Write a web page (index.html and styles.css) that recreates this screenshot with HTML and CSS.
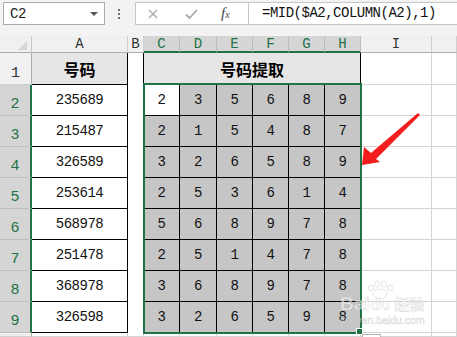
FILE: index.html
```html
<!DOCTYPE html>
<html lang="zh">
<head>
<meta charset="utf-8">
<title>号码提取</title>
<link rel="stylesheet" href="styles.css">
</head>
<body>
<div class="app">
  <div class="toolbar">
    <div class="namebox"><span>C2</span><i class="caret"></i></div>
    <div class="dots"><i></i><i></i><i></i></div>
    <div class="fbar">
      <div class="fbtns">
        <svg class="ic-x" width="10" height="10" viewBox="0 0 10 10"><path d="M1 1L9 9M9 1L1 9" stroke="#a8a8a8" stroke-width="1.4" fill="none"/></svg>
        <svg class="ic-ok" width="13" height="10" viewBox="0 0 13 10"><path d="M1 5.5L4.5 9L12 1" stroke="#a8a8a8" stroke-width="1.8" fill="none"/></svg>
        <span class="fx">f<small>x</small></span>
      </div>
      <div class="ftext">=MID($A2,COLUMN(A2),1)</div>
    </div>
  </div>

  <div class="sheet">
    <div class="corner"></div>
    <div class="ch">A</div><div class="ch">B</div>
    <div class="ch sel">C</div><div class="ch sel">D</div><div class="ch sel">E</div>
    <div class="ch sel">F</div><div class="ch sel">G</div><div class="ch sel">H</div>
    <div class="ch">I</div><div class="ch"></div>

    <div class="rh">1</div><div class="a hd">号码</div><div class="b"></div>
    <div class="m hd">号码提取</div><div class="g"></div><div class="g"></div>

    <div class="rh sel">2</div><div class="a">235689</div><div class="b"></div>
    <div class="d act">2</div><div class="d">3</div><div class="d">5</div><div class="d">6</div><div class="d">8</div><div class="d">9</div>
    <div class="g"></div><div class="g"></div>

    <div class="rh sel">3</div><div class="a">215487</div><div class="b"></div>
    <div class="d">2</div><div class="d">1</div><div class="d">5</div><div class="d">4</div><div class="d">8</div><div class="d">7</div>
    <div class="g"></div><div class="g"></div>

    <div class="rh sel">4</div><div class="a">326589</div><div class="b"></div>
    <div class="d">3</div><div class="d">2</div><div class="d">6</div><div class="d">5</div><div class="d">8</div><div class="d">9</div>
    <div class="g"></div><div class="g"></div>

    <div class="rh sel">5</div><div class="a">253614</div><div class="b"></div>
    <div class="d">2</div><div class="d">5</div><div class="d">3</div><div class="d">6</div><div class="d">1</div><div class="d">4</div>
    <div class="g"></div><div class="g"></div>

    <div class="rh sel">6</div><div class="a">568978</div><div class="b"></div>
    <div class="d">5</div><div class="d">6</div><div class="d">8</div><div class="d">9</div><div class="d">7</div><div class="d">8</div>
    <div class="g"></div><div class="g"></div>

    <div class="rh sel">7</div><div class="a">251478</div><div class="b"></div>
    <div class="d">2</div><div class="d">5</div><div class="d">1</div><div class="d">4</div><div class="d">7</div><div class="d">8</div>
    <div class="g"></div><div class="g"></div>

    <div class="rh sel">8</div><div class="a">368978</div><div class="b"></div>
    <div class="d">3</div><div class="d">6</div><div class="d">8</div><div class="d">9</div><div class="d">7</div><div class="d">8</div>
    <div class="g"></div><div class="g"></div>

    <div class="rh sel">9</div><div class="a">326598</div><div class="b"></div>
    <div class="d">3</div><div class="d">2</div><div class="d">6</div><div class="d">5</div><div class="d">9</div><div class="d">8</div>
    <div class="g"></div><div class="g"></div>

    <div class="rh"></div><div class="g"></div><div class="g"></div>
    <div class="g"></div><div class="g"></div><div class="g"></div><div class="g"></div><div class="g"></div><div class="g"></div>
    <div class="g"></div><div class="g"></div>

    <div class="selbox"></div>
  </div>

  <svg class="overlay" width="457" height="337" viewBox="0 0 457 337">
    <rect x="362.5" y="334.5" width="18" height="8" fill="#fff" stroke="#b0b0b0"/>
    <g fill="rgba(255,255,255,0.45)" stroke="rgba(160,160,160,0.35)" stroke-width="0.8">
      <ellipse cx="380" cy="294" rx="7" ry="5"/>
      <ellipse cx="371" cy="288" rx="2.5" ry="3"/>
      <ellipse cx="377" cy="284" rx="2.5" ry="3"/>
      <ellipse cx="384" cy="284" rx="2.5" ry="3"/>
      <ellipse cx="390" cy="288" rx="2.5" ry="3"/>
    </g>
    <polygon points="362,165 364,147 371,153 418,113 420,115 376,159 380,162" fill="#f41c1c"/>
  </svg>
  <div class="wm">
    <div class="wm-top"><span class="wm-bai">Bai</span><span class="wm-du">du</span><span class="wm-jy">经验</span></div>
    <div class="wm-url">jingyan.baidu.com</div>
  </div>
</div>
</body>
</html>
```

FILE: styles.css
```css
html, body {
  margin: 0;
  padding: 0;
}
body {
  background: #f3f3f3;
  font-family: "Liberation Mono", "DejaVu Sans Mono", monospace;
}
.app {
  position: relative;
  width: 457px;
  height: 337px;
  overflow: hidden;
  background: #f3f3f3;
}

/* toolbar */
.toolbar {
  box-sizing: border-box;
  height: 36px;
  padding: 2px 0 0 3px;
  display: flex;
  align-items: flex-start;
}
.namebox {
  box-sizing: border-box;
  width: 102px;
  height: 23px;
  border: 1px solid #ababab;
  background: #fff;
  display: flex;
  align-items: center;
  padding-left: 6px;
  font-size: 14px;
  letter-spacing: -0.5px;
  color: #222;
}
.namebox span {
  flex: 1;
}
.caret {
  width: 0;
  height: 0;
  border-left: 4px solid transparent;
  border-right: 4px solid transparent;
  border-top: 4px solid #555;
  margin-right: 6px;
}
.dots {
  margin-left: 13px;
  width: 3px;
  padding-top: 7px;
  display: flex;
  flex-direction: column;
  gap: 2px;
}
.dots i {
  display: block;
  width: 2px;
  height: 2px;
  background: #6e6e6e;
}
.fbar {
  margin-left: 14px;
  margin-right: -4px;
  flex: 1;
  box-sizing: border-box;
  height: 23px;
  border: 1px solid #c6c6c6;
  background: #fff;
  display: flex;
}
.fbtns {
  width: 112px;
  display: flex;
  align-items: center;
}
.ic-x {
  margin-left: 12px;
}
.ic-ok {
  margin-left: 27px;
}
.fx {
  margin-left: 23px;
  font-family: "Liberation Serif", serif;
  font-style: italic;
  font-size: 15px;
  color: #444;
}
.fx small {
  font-size: 10px;
}
.ftext {
  flex: 1;
  border-left: 1px solid #c6c6c6;
  padding-left: 13px;
  font-size: 14px;
  letter-spacing: -0.5px;
  line-height: 21px;
  color: #111;
  white-space: nowrap;
}

/* sheet */
.sheet {
  position: relative;
  display: grid;
  grid-template-columns: 32px 96px 16px 36px 37px 36px 36px 36px 36px 71px 1fr;
  grid-template-rows: 17px 32px repeat(8, 31px) 1fr;
  height: 301px;
  background: #fff;
  font-size: 14px;
  letter-spacing: -0.5px;
  color: #111;
}
.sheet > div {
  box-sizing: border-box;
}
.corner {
  position: relative;
  background: #f0f0f0;
  border-right: 1px solid #c8c8c8;
  border-bottom: 1px solid #ababab;
}
.corner::after {
  content: "";
  position: absolute;
  right: 4px;
  bottom: 2px;
  width: 0;
  height: 0;
  border-left: 9px solid transparent;
  border-bottom: 9px solid #d6d6d6;
}
.ch {
  background: #f0f0f0;
  border-right: 1px solid #d0d0d0;
  border-bottom: 1px solid #ababab;
  display: flex;
  align-items: center;
  justify-content: center;
  color: #333;
  letter-spacing: 0;
}
.ch.sel {
  background: #d5d5d5;
  color: #217346;
  border-right-color: #bdbdbd;
  border-bottom: 2px solid #217346;
  padding-top: 1px;
}
.rh {
  background: #f0f0f0;
  border-right: 1px solid #ababab;
  border-bottom: 1px solid #d0d0d0;
  display: flex;
  align-items: flex-end;
  justify-content: center;
  padding-bottom: 2px;
  font-size: 15px;
  letter-spacing: 0;
  color: #333;
}
.rh.sel {
  background: #d5d5d5;
  color: #217346;
  border-right: 2px solid #217346;
  border-bottom-color: #bdbdbd;
}
.a, .d, .m {
  display: flex;
  align-items: center;
  justify-content: center;
  border-right: 1px solid #000;
  border-bottom: 1px solid #000;
}
.a {
  background: #fff;
}
.b {
  background: #fff;
  border-right: 1px solid #000;
}
.m {
  grid-column: span 6;
}
.hd {
  background: #e7e6e6;
  font-family: "Noto Sans CJK SC", "Noto Sans", sans-serif;
  font-weight: 700;
  font-size: 16px;
  letter-spacing: 0;
  color: #000;
}
.d {
  background: #c6c6c6;
}
.d.act {
  background: #fff;
}
.g {
  background: #fff;
  border-right: 1px solid #d4d4d4;
  border-bottom: 1px solid #d4d4d4;
}
/* selection rectangle lies over cells C2:H9 */
.selbox {
  position: absolute;
  left: 143px;
  top: 47px;
  width: 219px;
  height: 251px;
  border: 2px solid #217346;
  pointer-events: none;
}
.selbox::after {
  content: "";
  position: absolute;
  right: -3px;
  bottom: -3px;
  width: 5px;
  height: 5px;
  background: #217346;
  border: 1px solid #fff;
}

/* overlays */
.overlay {
  position: absolute;
  left: 0;
  top: 0;
  pointer-events: none;
}
.wm {
  position: absolute;
  left: 340px;
  top: 295px;
  pointer-events: none;
  color: rgba(255, 255, 255, 0.55);
  -webkit-text-stroke: 0.6px rgba(150, 150, 150, 0.35);
}
.wm-top {
  display: flex;
  align-items: baseline;
  height: 17px;
  line-height: 17px;
}
.wm-bai {
  font-family: "Liberation Sans", sans-serif;
  font-weight: 700;
  font-size: 19px;
  letter-spacing: 0;
}
.wm-du {
  font-family: "Liberation Sans", sans-serif;
  font-weight: 700;
  font-size: 16px;
  margin-left: 1px;
}
.wm-jy {
  font-family: "Noto Sans CJK SC", sans-serif;
  font-weight: 700;
  font-size: 15px;
  margin-left: 4px;
}
.wm-url {
  font-family: "Liberation Sans", sans-serif;
  font-size: 10.5px;
  line-height: 10px;
  margin-top: 3px;
  letter-spacing: 0;
}
```
